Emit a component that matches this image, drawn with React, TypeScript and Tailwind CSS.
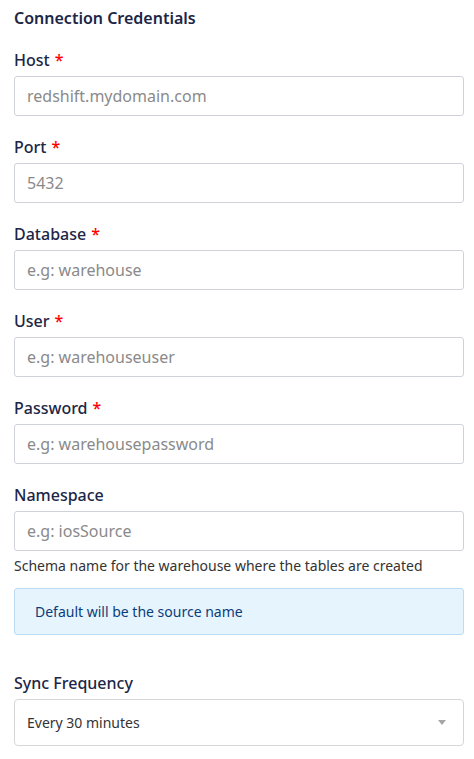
import React from 'react'

const fields = [
  { label: 'Host', required: true, placeholder: 'redshift.mydomain.com' },
  { label: 'Port', required: true, placeholder: '5432' },
  { label: 'Database', required: true, placeholder: 'e.g: warehouse' },
  { label: 'User', required: true, placeholder: 'e.g: warehouseuser' },
  { label: 'Password', required: true, placeholder: 'e.g: warehousepassword' },
]

function Label({ text, required }: { text: string; required?: boolean }) {
  return (
    <div className="h-[22px] text-[16px] leading-[22px] font-medium text-[#1c2646]">
      {text}
      {required && <span className="ml-[5px] text-[#ff0000]">*</span>}
    </div>
  )
}

export default function App() {
  return (
    <div className="min-h-screen bg-white pl-[14px] pr-[10px] pt-[7px] font-['Noto_Sans','Open_Sans',sans-serif]">
      <h2 className="h-[22px] text-[16px] leading-[22px] font-semibold text-[#1c2646]">Connection Credentials</h2>

      {fields.map(f => (
        <div key={f.label} className="mt-[20px]">
          <Label text={f.label} required={f.required} />
          <input
            type="text"
            placeholder={f.placeholder}
            className="mt-[5px] block h-[40px] w-full rounded-[3px] border border-[#cfd3d9] px-[12px] text-[16px] text-[#333] placeholder:text-[#8a8a8a] outline-none"
          />
        </div>
      ))}

      <div className="mt-[20px]">
        <Label text="Namespace" />
        <input
          type="text"
          placeholder="e.g: iosSource"
          className="mt-[5px] block h-[40px] w-full rounded-[3px] border border-[#cfd3d9] px-[12px] text-[16px] text-[#333] placeholder:text-[#8a8a8a] outline-none"
        />
        <div className="mt-[5px] h-[20px] text-[14px] leading-[20px] text-[#333]">
          Schema name for the warehouse where the tables are created
        </div>
        <div className="mt-[12px] flex h-[47px] items-center rounded-[3px] border border-[#bcdcf6] bg-[#e6f4fe] px-[20px] text-[14px] text-[#0a3d7a]">
          Default will be the source name
        </div>
      </div>

      <div className="mt-[37px]">
        <Label text="Sync Frequency" />
        <div className="mt-[5px] flex h-[47px] w-full items-center justify-between rounded-[4px] border border-[#d6d6d6] pl-[12px] pr-[17px] text-[14px] text-[#333]">
          <span>Every 30 minutes</span>
          <svg width="8" height="5" viewBox="0 0 8 5"><path d="M0 0h8L4 5z" fill="#a6a6a6" /></svg>
        </div>
      </div>
    </div>
  )
}
